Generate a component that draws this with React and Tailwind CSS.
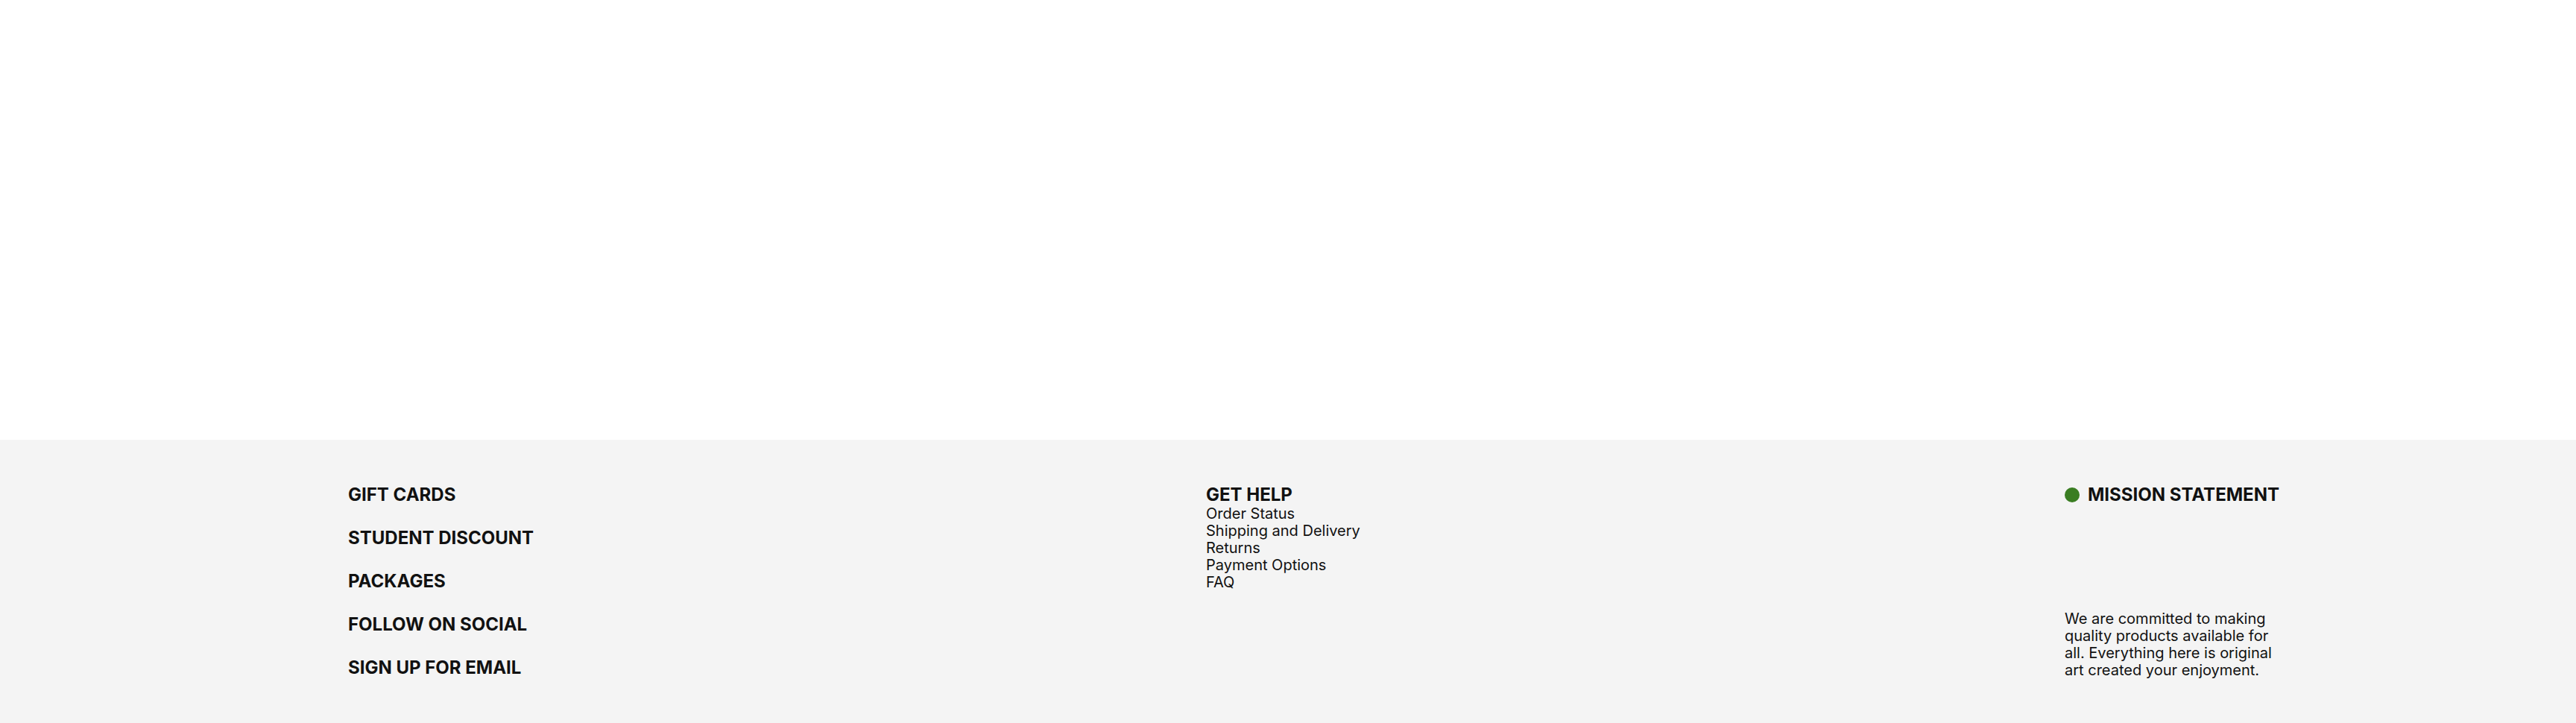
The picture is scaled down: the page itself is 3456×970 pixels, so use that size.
import React from 'react';

const helpLinks = ['Order Status', 'Shipping and Delivery', 'Returns', 'Payment Options', 'FAQ'];
const mainLinks = ['GIFT CARDS', 'STUDENT DISCOUNT', 'PACKAGES', 'FOLLOW ON SOCIAL', 'SIGN UP FOR EMAIL'];

const App = () => {
  return (
    <div className="min-h-screen bg-white font-['Inter',sans-serif] text-[#111111]">
      <main className="h-[590px]" />

      <footer className="h-[380px] bg-[#f4f4f4]">
        <div className="grid grid-cols-[1151px_1152px_auto] pl-[467px] pt-[60px]">
          <ul className="flex flex-col gap-[30px]">
            {mainLinks.map((item) => (
              <li key={item} className="text-[24px] font-bold leading-[28px]">
                {item}
              </li>
            ))}
          </ul>

          <div>
            <h4 className="text-[24px] font-bold leading-[28px]">GET HELP</h4>
            <ul>
              {helpLinks.map((link) => (
                <li key={link} className="text-[20px] leading-[23px]">
                  {link}
                </li>
              ))}
            </ul>
          </div>

          <div>
            <div className="flex items-center gap-[11px]">
              <span className="h-5 w-5 rounded-full bg-[#3a7d22]" />
              <h4 className="text-[24px] font-bold leading-[28px]">MISSION STATEMENT</h4>
            </div>
            <p className="mt-[141px] w-[300px] text-[20px] leading-[23px]">
              We are committed to making quality products available for all. Everything here is
              original art created your enjoyment.
            </p>
          </div>
        </div>
      </footer>
    </div>
  );
};

export default App;
